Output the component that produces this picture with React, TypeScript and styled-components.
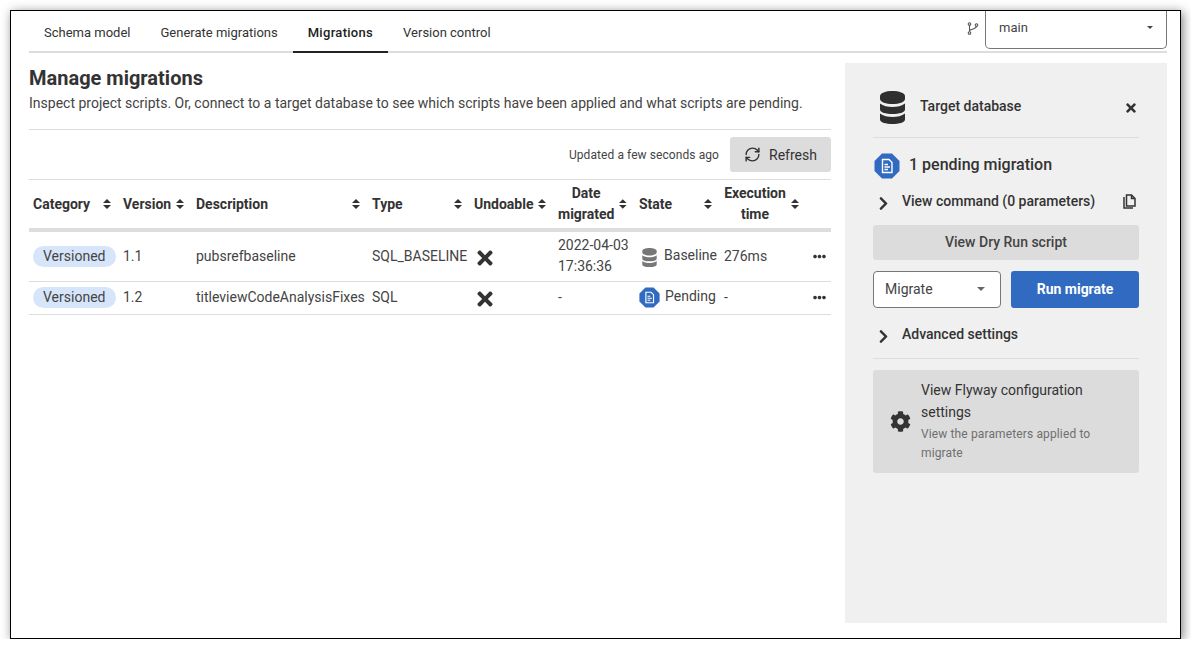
import React from 'react';
import styled, { createGlobalStyle } from 'styled-components';
import { FaChevronRight, FaCog, FaEllipsisH, FaTimes } from 'react-icons/fa';
import { RefreshCw } from 'lucide-react';

const GlobalStyle = createGlobalStyle`
  html, body {
    margin: 0;
    background: #fff;
    font-family: Roboto, "Liberation Sans", sans-serif;
    color: #333;
  }
`;

const rows = [
  { version: '1.1', description: 'pubsrefbaseline', type: 'SQL_BASELINE', date: ['2022-04-03', '17:36:36'], state: 'Baseline', time: '276ms' },
  { version: '1.2', description: 'titleviewCodeAnalysisFixes', type: 'SQL', date: ['-'], state: 'Pending', time: '-' },
];

const columns = [
  { label: 'Category', width: 90 },
  { label: 'Version', width: 73 },
  { label: 'Description', width: 176 },
  { label: 'Type', width: 102 },
  { label: 'Undoable', width: 84 },
  { label: 'Date migrated', width: 81, center: true },
  { label: 'State', width: 85 },
  { label: 'Execution time', width: 87, center: true },
  { label: '', width: 24 },
];

const SortIcon = () => (
  <svg width="8" height="10" viewBox="0 0 8 10">
    <path d="M4 0 L8 4 H0 Z M0 6 H8 L4 10 Z" fill="#333" />
  </svg>
);

const DbIcon = ({ width, height, color }: { width: number; height: number; color: string }) => (
  <svg width={width} height={height} viewBox="0 0 25 33" fill={color}>
    <path d="M0 5 C0 2 6 0 12.5 0 S25 2 25 5 V8 C25 11 19 13 12.5 13 S0 11 0 8 Z" />
    <path d="M0 12.5 C3 15 8 16 12.5 16 S22 15 25 12.5 V18.5 C25 21.5 19 23 12.5 23 S0 21.5 0 18.5 Z" />
    <path d="M0 22.5 C3 25 8 26 12.5 26 S22 25 25 22.5 V28.5 C25 31.5 19 33 12.5 33 S0 31.5 0 28.5 Z" />
  </svg>
);

const PendingIcon = ({ size }: { size: number }) => (
  <svg width={size} height={size} viewBox="0 0 26 26">
    <path d="M8 0.5 H18 L25.5 8 V18 L18 25.5 H8 L0.5 18 V8 Z" fill="#316bc1" />
    <path d="M8.5 6.5 H15 L18 9.5 V19.5 H8.5 Z" fill="none" stroke="#fff" strokeWidth="1.4" />
    <path d="M10.5 11.5 H14 M10.5 14 H16 M10.5 16.5 H14" stroke="#fff" strokeWidth="1.3" />
  </svg>
);

const BranchIcon = () => (
  <svg width="12" height="13" viewBox="0 0 12 13" fill="none" stroke="#555" strokeWidth="1.1">
    <circle cx="2.5" cy="2" r="1.3" />
    <circle cx="2.5" cy="11" r="1.3" />
    <circle cx="9.5" cy="3" r="1.3" />
    <path d="M2.5 3.3 V9.7 M9.5 4.3 C9.5 7 5 6.5 2.5 8.5" />
  </svg>
);

const CopyIcon = () => (
  <svg width="13" height="15" viewBox="0 0 13 15" fill="none" stroke="#333" strokeWidth="1.5">
    <path d="M3.5 1 H8.5 L12 4.5 V12 H3.5 Z" />
    <path d="M8.5 1 V4.5 H12" />
    <path d="M1 3 V14 H10" />
  </svg>
);

export default function App() {
  return (
    <Frame>
      <GlobalStyle />
      <TopBar>
        <Tabs>
          <Tab>Schema model</Tab>
          <Tab>Generate migrations</Tab>
          <Tab $active>Migrations</Tab>
          <Tab>Version control</Tab>
        </Tabs>
        <BranchPicker>
          <BranchIcon />
          <BranchSelect>
            main
            <SmallCaret />
          </BranchSelect>
        </BranchPicker>
      </TopBar>
      <Body>
        <Main>
          <Title>Manage migrations</Title>
          <Subtitle>Inspect project scripts. Or, connect to a target database to see which scripts have been applied and what scripts are pending.</Subtitle>
          <Toolbar>
            <Updated>Updated a few seconds ago</Updated>
            <RefreshButton>
              <RefreshCw size={17} strokeWidth={2} />
              Refresh
            </RefreshButton>
          </Toolbar>
          <Table>
            <colgroup>
              {columns.map((c, i) => <col key={i} width={c.width} />)}
            </colgroup>
            <thead>
              <tr>
                {columns.map((c, i) => (
                  <Th key={i}>
                    {c.label && (
                      <HeadInner>
                        <HeadLabel $center={c.center}>{c.label}</HeadLabel>
                        <SortIcon />
                      </HeadInner>
                    )}
                  </Th>
                ))}
              </tr>
            </thead>
            <tbody>
              {rows.map(r => (
                <tr key={r.version}>
                  <Td><Pill>Versioned</Pill></Td>
                  <Td>{r.version}</Td>
                  <Td>{r.description}</Td>
                  <Td>{r.type}</Td>
                  <Td><UndoMark><FaTimes size={22} /></UndoMark></Td>
                  <Td>{r.date.map(d => <div key={d}>{d}</div>)}</Td>
                  <Td>
                    <StateCell>
                      {r.state === 'Baseline' ? <BaselineIcon><DbIcon width={15} height={19} color="#777" /></BaselineIcon> : <PendingIcon size={21} />}
                      <StateLabel>{r.state}</StateLabel>
                    </StateCell>
                  </Td>
                  <Td>{r.time}</Td>
                  <Td><RowMenu><FaEllipsisH size={13} /></RowMenu></Td>
                </tr>
              ))}
            </tbody>
          </Table>
        </Main>
        <Side>
          <SideHead>
            <DbIcon width={25} height={33} color="#2f2f2f" />
            <SideTitle>Target database</SideTitle>
            <FaTimes size={14} />
          </SideHead>
          <PendingHead>
            <PendingIcon size={26} />
            <PendingText>1 pending migration</PendingText>
          </PendingHead>
          <Disclosure>
            <FaChevronRight size={15} />
            <DisclosureLabel>View command (0 parameters)</DisclosureLabel>
            <CopyIcon />
          </Disclosure>
          <DryRun>View Dry Run script</DryRun>
          <RunRow>
            <MigrateSelect>
              Migrate
              <Caret />
            </MigrateSelect>
            <RunButton>Run migrate</RunButton>
          </RunRow>
          <AdvancedRow>
            <FaChevronRight size={15} />
            <DisclosureLabel>Advanced settings</DisclosureLabel>
          </AdvancedRow>
          <ConfigCard>
            <FaCog size={21} />
            <ConfigText>
              <ConfigTitle>View Flyway configuration settings</ConfigTitle>
              <ConfigHint>View the parameters applied to migrate</ConfigHint>
            </ConfigText>
          </ConfigCard>
        </Side>
      </Body>
    </Frame>
  );
}

const Frame = styled.div`
  box-sizing: border-box;
  width: 1171px;
  height: 629px;
  margin: 10px 0 0 10px;
  padding: 0 13px 0 18px;
  border: 1px solid #000;
  background: #fff;
  box-shadow: 2px 2px 10px rgba(0, 0, 0, 0.5);
  overflow: hidden;
`;

const TopBar = styled.div`
  display: flex;
  justify-content: space-between;
  height: 40px;
  border-bottom: 2px solid #ddd;
`;

const Tabs = styled.div`
  display: flex;
`;

const Tab = styled.div<{ $active?: boolean }>`
  height: 42px;
  padding: 14px 15px 0;
  box-sizing: border-box;
  font-size: 13px;
  line-height: 16px;
  color: ${p => (p.$active ? '#1d1d1d' : '#333')};
  font-weight: ${p => (p.$active ? 500 : 400)};
  letter-spacing: ${p => (p.$active ? '0.3px' : '0')};
  border-bottom: 2px solid ${p => (p.$active ? '#222' : 'transparent')};
`;

const BranchPicker = styled.div`
  display: flex;
  align-items: flex-start;
  gap: 6px;
  & > svg {
    margin-top: 11px;
  }
`;

const BranchSelect = styled.div`
  box-sizing: border-box;
  width: 182px;
  height: 38px;
  padding: 0 13px 4px 13px;
  display: flex;
  align-items: center;
  justify-content: space-between;
  border: 1px solid #777;
  border-top: none;
  border-radius: 0 0 5px 5px;
  font-size: 13px;
  color: #444;
`;

const Caret = styled.span`
  width: 0;
  height: 0;
  border-left: 4px solid transparent;
  border-right: 4px solid transparent;
  border-top: 4px solid #666;
`;

const SmallCaret = styled.span`
  width: 0;
  height: 0;
  border-left: 3px solid transparent;
  border-right: 3px solid transparent;
  border-top: 3px solid #444;
`;

const Body = styled.div`
  display: flex;
  justify-content: space-between;
  padding-top: 10px;
`;

const Main = styled.div`
  width: 802px;
`;

const Title = styled.h1`
  margin: 3px 0 0;
  font-size: 20px;
  line-height: 24px;
  font-weight: 700;
  color: #333;
`;

const Subtitle = styled.p`
  margin: 3px 0 0;
  font-size: 14px;
  line-height: 20px;
  color: #444;
  padding-bottom: 16px;
  border-bottom: 1px solid #ddd;
`;

const Toolbar = styled.div`
  display: flex;
  justify-content: flex-end;
  align-items: center;
  gap: 11px;
  padding: 7px 0;
  border-bottom: 1px solid #ddd;
`;

const Updated = styled.span`
  font-size: 12px;
  letter-spacing: 0.08px;
  color: #444;
`;

const RefreshButton = styled.div`
  box-sizing: border-box;
  width: 101px;
  height: 35px;
  display: flex;
  align-items: center;
  justify-content: center;
  gap: 8px;
  background: #dcdcdc;
  border-radius: 3px;
  font-size: 14px;
  color: #333;
`;

const Table = styled.table`
  width: 802px;
  table-layout: fixed;
  border-collapse: collapse;
  font-size: 14px;
  color: #444;
`;

const Th = styled.th`
  height: 48px;
  padding: 0 8px 0 4px;
  border-bottom: 4px solid #ddd;
  font-weight: 700;
  color: #333;
  text-align: left;
`;

const HeadInner = styled.div`
  display: flex;
  align-items: center;
  justify-content: space-between;
  line-height: 21px;
`;

const HeadLabel = styled.span<{ $center?: boolean }>`
  text-align: ${p => (p.$center ? 'center' : 'left')};
  ${p => p.$center && 'flex: 1; padding-right: 5px;'}
`;

const Td = styled.td`
  height: 25px;
  padding: 3px 3px 4px 4px;
  border-bottom: 1px solid #ddd;
  line-height: 21px;
  white-space: nowrap;
  overflow: visible;
`;

const Pill = styled.span`
  display: inline-block;
  padding: 0 11px 0 10px;
  height: 21px;
  line-height: 21px;
  border-radius: 11px;
  background: #d7e5fa;
  vertical-align: top;
`;

const UndoMark = styled.span`
  display: flex;
  margin-top: 3px;
  color: #333;
`;

const StateCell = styled.div`
  display: flex;
  align-items: center;
  gap: 5px;
`;

const StateLabel = styled.span`
  margin-top: -2px;
`;

const BaselineIcon = styled.span`
  display: flex;
  width: 21px;
  justify-content: center;
  margin: 2px 0 0 0;
`;

const RowMenu = styled.span`
  display: flex;
  padding-left: 2px;
  color: #333;
`;

const Side = styled.aside`
  box-sizing: border-box;
  width: 322px;
  height: 560px;
  padding: 28px 28px 0;
  background: #f0f0f0;
  font-size: 14px;
`;

const SideHead = styled.div`
  display: flex;
  align-items: center;
  height: 33px;
  padding-bottom: 13px;
  border-bottom: 1px solid #ddd;
  & > svg:first-child {
    margin-left: 7px;
  }
  & > svg:last-child {
    margin-right: 1px;
  }
`;

const SideTitle = styled.div`
  flex: 1;
  margin: -3px 0 0 15px;
  font-weight: 500;
  color: #333;
`;

const PendingHead = styled.div`
  display: flex;
  align-items: center;
  gap: 9px;
  margin-top: 15px;
  padding-left: 1px;
  font-size: 16px;
  font-weight: 500;
  color: #333;
`;

const PendingText = styled.span`
  margin-top: -3px;
`;

const Disclosure = styled.div`
  display: flex;
  align-items: center;
  height: 20px;
  margin-top: 12px;
  padding: 0 3px 0 3px;
  color: #333;
  & > svg:first-child {
    margin-top: 4px;
  }
  & > svg:last-child {
    margin-top: 1px;
  }
`;

const DisclosureLabel = styled.div`
  flex: 1;
  margin-left: 11px;
  font-weight: 500;
`;

const DryRun = styled.div`
  height: 35px;
  margin-top: 14px;
  background: #dcdcdc;
  border-radius: 3px;
  display: flex;
  align-items: center;
  justify-content: center;
  font-weight: 500;
  color: #444;
  box-sizing: border-box;
  padding-bottom: 1px;
`;

const RunRow = styled.div`
  display: flex;
  justify-content: space-between;
  margin-top: 11px;
`;

const MigrateSelect = styled.div`
  box-sizing: border-box;
  width: 128px;
  height: 37px;
  padding: 0 15px 1px 11px;
  display: flex;
  align-items: center;
  justify-content: space-between;
  background: #fff;
  border: 1px solid #777;
  border-radius: 4px;
  color: #444;
`;

const RunButton = styled.div`
  box-sizing: border-box;
  width: 128px;
  height: 37px;
  padding-bottom: 1px;
  display: flex;
  align-items: center;
  justify-content: center;
  background: #316bc1;
  border-radius: 3px;
  color: #fff;
  font-weight: 700;
`;

const AdvancedRow = styled.div`
  display: flex;
  align-items: center;
  height: 20px;
  margin-top: 16px;
  padding: 0 0 14px 3px;
  border-bottom: 1px solid #ddd;
  color: #333;
  & > svg:first-child {
    margin-top: 4px;
  }
`;

const ConfigCard = styled.div`
  box-sizing: border-box;
  height: 103px;
  margin-top: 11px;
  padding: 9px 16px 0 17px;
  display: flex;
  align-items: center;
  gap: 10px;
  background: #dcdcdc;
  border-radius: 3px;
  & > svg {
    flex: none;
    margin-top: -9px;
  }
`;

const ConfigText = styled.div`
  align-self: flex-start;
`;

const ConfigTitle = styled.div`
  line-height: 22px;
  color: #333;
`;

const ConfigHint = styled.div`
  margin-top: 2px;
  font-size: 12px;
  line-height: 19px;
  letter-spacing: 0.13px;
  color: #6f6f6f;
`;
